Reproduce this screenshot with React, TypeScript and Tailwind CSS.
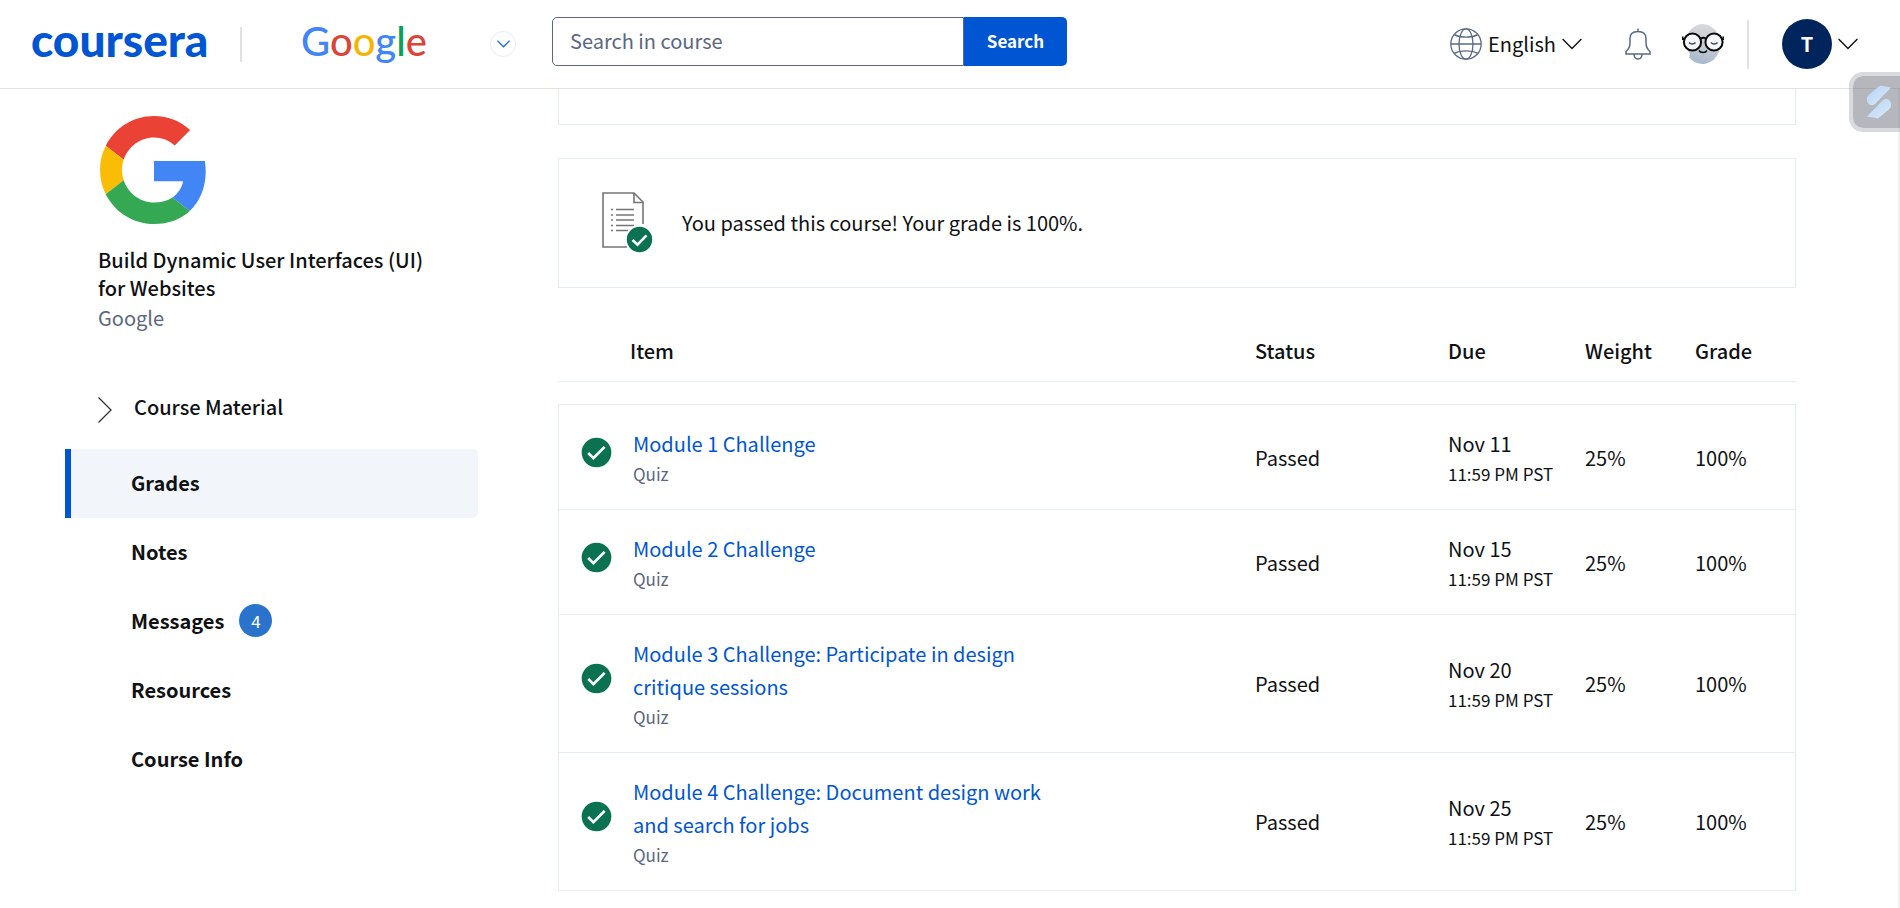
import React from "react";

type Grade = {
  title: string;
  kind: string;
  status: string;
  date: string;
  time: string;
  weight: string;
  grade: string;
};

const grades: Grade[] = [
  { title: "Module 1 Challenge", kind: "Quiz", status: "Passed", date: "Nov 11", time: "11:59 PM PST", weight: "25%", grade: "100%" },
  { title: "Module 2 Challenge", kind: "Quiz", status: "Passed", date: "Nov 15", time: "11:59 PM PST", weight: "25%", grade: "100%" },
  { title: "Module 3 Challenge: Participate in design critique sessions", kind: "Quiz", status: "Passed", date: "Nov 20", time: "11:59 PM PST", weight: "25%", grade: "100%" },
  { title: "Module 4 Challenge: Document design work and search for jobs", kind: "Quiz", status: "Passed", date: "Nov 25", time: "11:59 PM PST", weight: "25%", grade: "100%" },
];

const navItems: { label: string; active?: boolean; count?: number }[] = [
  { label: "Grades", active: true },
  { label: "Notes" },
  { label: "Messages", count: 4 },
  { label: "Resources" },
  { label: "Course Info" },
];

function ChevronDown({ className }: { className: string }) {
  return (
    <svg viewBox="0 0 20 12" className={className} fill="none" stroke="currentColor" aria-hidden="true">
      <path d="M0.6 1 10 10.4 19.4 1" strokeWidth="1.4" vectorEffect="non-scaling-stroke" />
    </svg>
  );
}

function CheckCircle({ className }: { className: string }) {
  return (
    <svg viewBox="0 0 32 32" className={className} role="img" aria-label="Completed">
      <circle cx="16" cy="16" r="15.3" fill="#0a7250" />
      <path d="m7.4 16.6 5.4 5.2L24.4 10.2" fill="none" stroke="#fff" strokeWidth="2.8" />
    </svg>
  );
}

function GoogleMark() {
  return (
    <svg viewBox="0 0 48 48" className="size-[108px]" role="img" aria-label="Google">
      <path fill="#EA4335" d="M24 9.5c3.54 0 6.71 1.22 9.21 3.6l6.85-6.85C35.9 2.38 30.47 0 24 0 14.62 0 6.51 5.38 2.56 13.22l7.98 6.19C12.43 13.72 17.74 9.5 24 9.5z" />
      <path fill="#4285F4" d="M46.98 24.55c0-1.57-.15-3.09-.38-4.55H24v9.02h12.94c-.58 2.96-2.26 5.48-4.78 7.18l7.73 6c4.51-4.18 7.09-10.36 7.09-17.65z" />
      <path fill="#FBBC05" d="M10.53 28.59c-.48-1.45-.76-2.99-.76-4.59s.27-3.14.76-4.59l-7.98-6.19C.92 16.46 0 20.12 0 24c0 3.88.92 7.54 2.56 10.78l7.97-6.19z" />
      <path fill="#34A853" d="M24 48c6.48 0 11.93-2.13 15.89-5.81l-7.73-6c-2.15 1.45-4.92 2.3-8.16 2.3-6.26 0-11.57-4.22-13.47-9.91l-7.98 6.19C6.51 42.62 14.62 48 24 48z" />
    </svg>
  );
}

function GlobeIcon() {
  return (
    <svg viewBox="0 0 32 32" className="size-8" fill="none" stroke="#5b6a87" strokeWidth="1.3" aria-hidden="true">
      <circle cx="16" cy="16" r="15.2" />
      <ellipse cx="16" cy="16" rx="7" ry="15.2" />
      <path d="M0.8 16h30.4M4.2 6.6c3.2 1.7 7.3 2.5 11.8 2.5s8.6-.8 11.8-2.5M4.2 25.4c3.2-1.7 7.3-2.5 11.8-2.5s8.6.8 11.8 2.5" />
    </svg>
  );
}

function BellIcon() {
  return (
    <svg viewBox="0 0 26 32" className="h-8 w-[26px]" fill="none" stroke="#5b6a87" strokeWidth="1.5" aria-hidden="true">
      <path d="M13 0.5v3M1 26v-2.5c2.6-2.2 4-4.7 4-8.5V10.5C5 6 8 3.5 13 3.5s8 2.5 8 7V15c0 3.8 1.4 6.3 4 8.5V26z" />
      <path d="M9 26c0 6.6 8 6.6 8 0" />
    </svg>
  );
}

function GlassesAvatar() {
  return (
    <svg viewBox="0 0 42 42" className="size-[42px]" aria-hidden="true">
      <defs>
        <linearGradient id="face" x1="0.6" y1="0" x2="0.4" y2="1">
          <stop offset="0" stopColor="#d8d8da" />
          <stop offset="0.5" stopColor="#c6ccd3" />
          <stop offset="1" stopColor="#a7b9cd" />
        </linearGradient>
      </defs>
      <path d="M21 1a18 20 0 1 1-13.8 33.5L8 31 3.5 24A18 20 0 0 1 21 1z" fill="url(#face)" />
      <g fill="#f5f7fa" stroke="#0b0b0b" strokeWidth="2">
        <circle cx="10.5" cy="19" r="8.6" />
        <circle cx="32" cy="19" r="8.6" />
      </g>
      <g fill="none" stroke="#0b0b0b" strokeWidth="2">
        <path d="M18.6 16c1.6-1.4 3.8-1.4 5.4 0M0.5 13.5v2.5h2M41.5 13.5v2.5h-2" />
        <path d="M17 27.5c1.5 2.5 6.5 2.5 8 0" strokeWidth="1.5" />
      </g>
      <path d="M7 19.5c1.5 2 5 2 6.5 0M29 19.5c1.5 2 5 2 6.5 0" fill="none" stroke="#3d4a63" strokeWidth="1.5" />
    </svg>
  );
}

function PassedDocument() {
  return (
    <svg viewBox="0 0 52 62" className="h-[62px] w-[52px]" aria-hidden="true">
      <path d="M41 32V10L32 1H1v54h24" fill="none" stroke="#757575" strokeWidth="1.6" />
      <path d="M32 1v9.5h9" fill="none" stroke="#757575" strokeWidth="1.6" />
      <path d="M14 17.5h18M14 23h18M14 28h18M14 33.5h18M14 38.5h12" stroke="#757575" strokeWidth="1.5" />
      <path d="M9 17.5h2M9 23h2M9 28h2M9 33.5h2M9 38.5h2" stroke="#757575" strokeWidth="1.5" />
      <circle cx="37.5" cy="47.5" r="14.5" fill="#fff" />
      <circle cx="37.5" cy="47.5" r="12.7" fill="#0a7250" />
      <path d="m30.5 48 5 4.7 9-9.4" fill="none" stroke="#fff" strokeWidth="2.6" />
    </svg>
  );
}

function Header() {
  return (
    <header className="flex h-[89px] items-center border-b border-[#e1e1e1] bg-white">
      <a href="#home" className="ml-[31px] w-[178px] pb-2 font-['Lato'] text-[46px] leading-none font-black text-[#0056d2]">
        coursera
      </a>
      <div className="ml-[31px] h-[35px] w-0.5 bg-[#e1e1e1]" />
      <a href="#google" aria-label="Google" className="ml-[59px] w-[126px] pb-1.5 font-['Lato'] text-[40px] leading-none font-medium">
        <span className="text-[#4285f4]">G</span>
        <span className="text-[#db4437]">o</span>
        <span className="text-[#f4b400]">o</span>
        <span className="text-[#4285f4]">g</span>
        <span className="text-[#0f9d58]">l</span>
        <span className="text-[#db4437]">e</span>
      </a>
      <button type="button" aria-label="Switch programme" className="ml-[63px] flex size-[26px] items-center justify-center rounded-full border border-[#e8eef7] text-[#1f6fe0]">
        <ChevronDown className="h-2 w-[13px]" />
      </button>
      <form className="mb-1.5 ml-9 flex h-[49px] w-[515px]">
        <input
          type="text"
          aria-label="Search in course"
          placeholder="Search in course"
          className="min-w-0 flex-1 rounded-l-[5px] border border-[#5b6780] px-[17px] text-[20px] outline-none placeholder:text-[#5b6780]"
        />
        <button type="button" className="w-[103px] rounded-r-[5px] bg-[#0056d2] text-[17px] font-bold text-white">
          Search
        </button>
      </form>
      <div className="mr-[42px] ml-auto flex items-center">
        <button type="button" className="flex items-center text-[20px]">
          <GlobeIcon />
          <span className="ml-1.5">English</span>
          <ChevronDown className="ml-1.5 h-3 w-5" />
        </button>
        <button type="button" aria-label="Notifications" className="ml-[43px]">
          <BellIcon />
        </button>
        <button type="button" aria-label="Coach" className="ml-[31px]">
          <GlassesAvatar />
        </button>
        <div className="ml-[23px] h-[49px] w-0.5 bg-[#e1e1e1]" />
        <button type="button" aria-label="Account menu" className="ml-[33px] flex items-center gap-1.5">
          <span className="flex size-[50px] items-center justify-center rounded-full bg-[#00255d] text-[20px] font-bold text-white">T</span>
          <ChevronDown className="h-3 w-5" />
        </button>
      </div>
    </header>
  );
}

function Sidebar() {
  return (
    <aside className="w-[478px] shrink-0 pt-[27px] pl-[65px]">
      <div className="pl-[33px]">
        <div className="pl-0.5">
          <GoogleMark />
        </div>
        <h1 className="mt-[22px] w-[340px] text-[20px] leading-7 font-medium">Build Dynamic User Interfaces (UI) for Websites</h1>
        <p className="mt-0.5 text-[20px] leading-7 text-[#5b6780]">Google</p>
        <button type="button" className="mt-[47px] flex h-14 items-center text-[20px] font-medium">
          <svg viewBox="0 0 14 26" className="mt-1.5 h-[26px] w-3.5" fill="none" stroke="#333" strokeWidth="1.3" aria-hidden="true">
            <path d="M0.5 0.5 13 13 0.5 25.5" />
          </svg>
          <span className="ml-[22px]">Course Material</span>
        </button>
      </div>
      <nav className="mt-[14px]">
        {navItems.map((item) => (
          <a
            key={item.label}
            href={"#" + item.label.toLowerCase().replace(" ", "-")}
            aria-current={item.active ? "page" : undefined}
            className={
              item.active
                ? "flex h-[69px] items-center rounded-r-[5px] border-l-[6px] border-[#0056d2] bg-[#f2f5fa] pb-0.5 pl-[60px] text-[20px] font-bold"
                : "flex h-[69px] items-center border-l-[6px] border-transparent pb-0.5 pl-[60px] text-[20px] font-bold"
            }
          >
            {item.label}
            {item.count !== undefined && (
              <span className="ml-[15px] flex size-[33px] items-center justify-center rounded-full bg-[#2a73cc] text-[17px] font-normal text-white">
                {item.count}
              </span>
            )}
          </a>
        ))}
      </nav>
    </aside>
  );
}

function GradesTable() {
  return (
    <table className="mt-7 w-full border-separate border-spacing-0 text-left">
      <thead>
        <tr className="text-[20px] leading-7">
          <th colSpan={2} className="border-b border-[#e5ecf8] pt-[21px] pb-4 pl-[72px] font-medium">Item</th>
          <th className="w-[193px] border-b border-[#e5ecf8] pt-[21px] pb-4 font-medium">Status</th>
          <th className="w-[137px] border-b border-[#e5ecf8] pt-[21px] pb-4 font-medium">Due</th>
          <th className="w-[110px] border-b border-[#e5ecf8] pt-[21px] pb-4 font-medium">Weight</th>
          <th className="w-[101px] border-b border-[#e5ecf8] pt-[21px] pb-4 font-medium">Grade</th>
        </tr>
      </thead>
      <tbody className="text-[20px] leading-[33px] before:block before:h-[22px] before:content-['']">
        {grades.map((row) => (
          <tr key={row.title} className="group">
            <td className="w-[75px] border-b border-l border-[#e5ecf8] pb-2.5 pl-[22px] group-first:border-t">
              <CheckCircle className="size-[31px]" />
            </td>
            <td className="border-b border-[#e5ecf8] pt-[22px] pb-[21px] group-first:border-t">
              <a href="#item" className="block max-w-[420px] text-[#0056d2]">{row.title}</a>
              <div className="text-[17px] leading-7 text-[#5b6780]">{row.kind}</div>
            </td>
            <td className="border-b border-[#e5ecf8] group-first:border-t">{row.status}</td>
            <td className="border-b border-[#e5ecf8] whitespace-nowrap group-first:border-t">
              <div>{row.date}</div>
              <div className="text-[17px] leading-7">{row.time}</div>
            </td>
            <td className="border-b border-[#e5ecf8] group-first:border-t">{row.weight}</td>
            <td className="border-r border-b border-[#e5ecf8] group-first:border-t">{row.grade}</td>
          </tr>
        ))}
      </tbody>
    </table>
  );
}

export default function App() {
  return (
    <div className="relative flex min-h-screen flex-col bg-white font-['Noto_Sans_CJK_SC',sans-serif] text-[#0f1114]">
      <Header />
      <div className="flex flex-1 border-r-2 border-[#f1f1f1]">
        <Sidebar />
        <main className="mr-[102px] ml-20 flex-1">
          <div className="h-9 border border-t-0 border-[#e5ecf8]" />
          <section className="mt-[33px] flex h-[130px] items-center border border-[#e5ecf8] pl-[43px]">
            <PassedDocument />
            <p className="ml-7 text-[20px]">You passed this course! Your grade is 100%.</p>
          </section>
          <GradesTable />
        </main>
      </div>
      <button
        type="button"
        aria-label="Open extension panel"
        className="absolute top-[72px] right-0 flex h-[60px] w-[51px] items-center justify-center rounded-l-[14px] border-4 border-r-0 border-[#b3b5bd]/50 bg-[#6d7079]/50 bg-clip-padding pl-1"
      >
        <svg viewBox="0 0 26 34" className="h-[34px] w-[26px]" aria-hidden="true">
          <defs>
            <linearGradient id="mark" x1="0" y1="0" x2="1" y2="1">
              <stop offset="0" stopColor="#b5d3f5" />
              <stop offset="1" stopColor="#dcebfb" />
            </linearGradient>
          </defs>
          <path d="M14 0.5 25 2.5 9 19c-4 3.5-9-1-8-6 .4-1.500 1-2.200 2-3.300z" fill="url(#mark)" />
          <path d="M12 33.500 1 31.500 17 15c4-3.500 9 1 8 6-.4 1.500-1 2.200-2 3.300z" fill="url(#mark)" />
        </svg>
      </button>
    </div>
  );
}
